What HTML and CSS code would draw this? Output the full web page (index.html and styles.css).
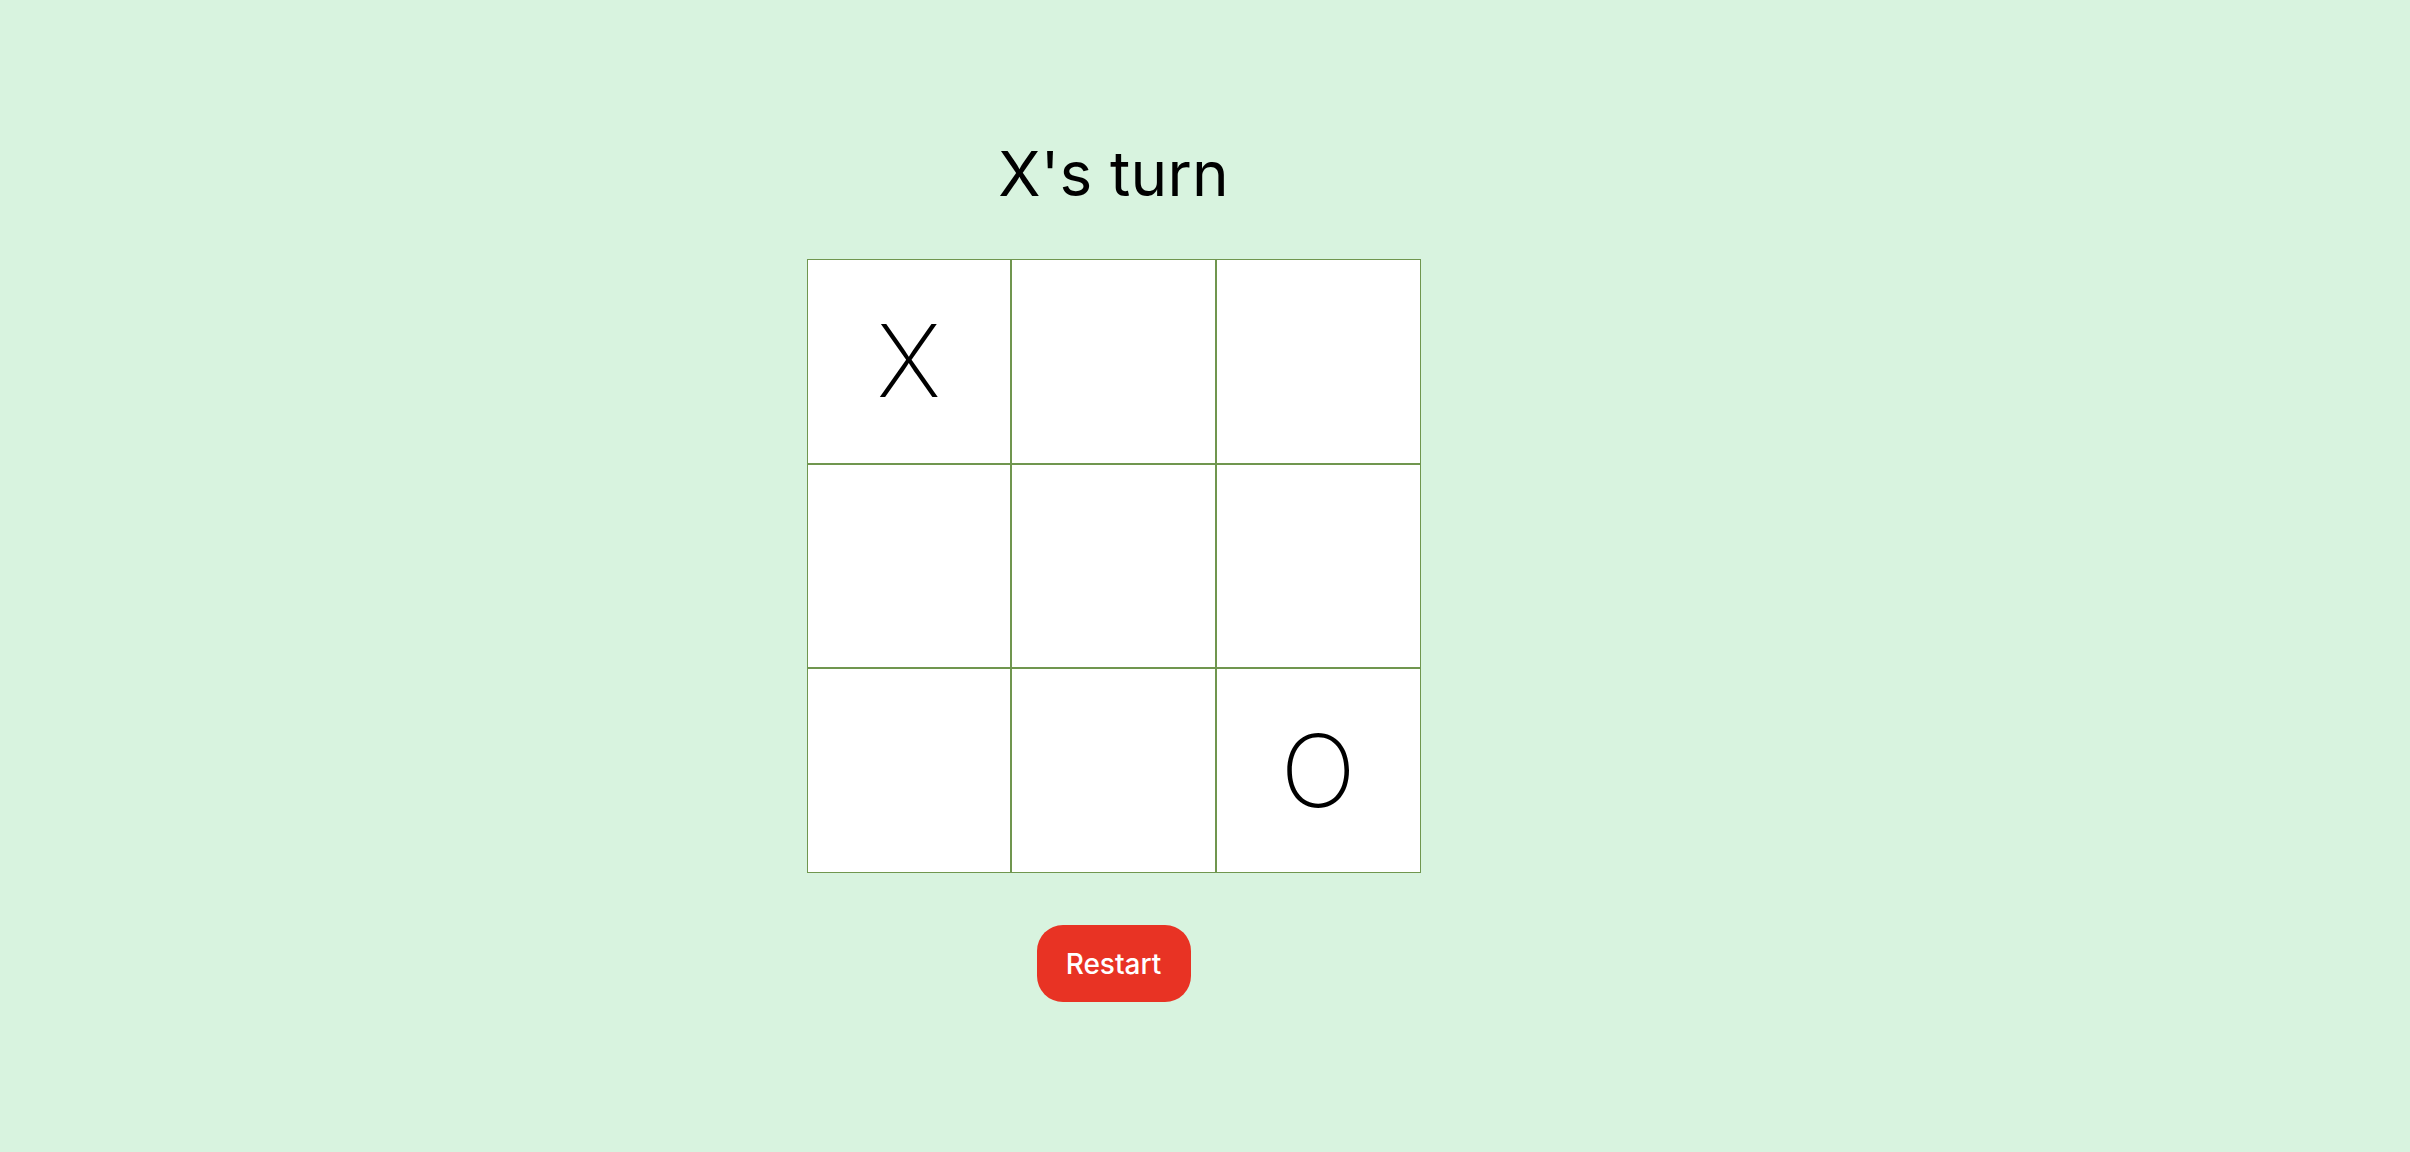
FILE: index.html
```html
<!DOCTYPE html>
<html lang="en">
<head>
<meta charset="utf-8">
<title>Tic Tac Toe</title>
<link rel="stylesheet" href="styles.css">
</head>
<body>
<main class="game">
  <h1 class="status">X's turn</h1>
  <div class="board">
    <div class="cell">X</div>
    <div class="cell"></div>
    <div class="cell"></div>
    <div class="cell"></div>
    <div class="cell"></div>
    <div class="cell"></div>
    <div class="cell"></div>
    <div class="cell"></div>
    <div class="cell">O</div>
  </div>
  <button class="restart">Restart</button>
</main>
</body>
</html>
```
FILE: styles.css
```css
html, body {
  margin: 0;
  padding: 0;
  background: #d8f3df;
  height: 100%;
}
body {
  font-family: Inter, "Noto Sans", sans-serif;
  color: #000;
}
.game {
  box-sizing: border-box;
  width: 2227px;
  display: flex;
  flex-direction: column;
  align-items: center;
  padding-top: 136px;
}
.status {
  margin: 0;
  font-size: 62px;
  font-weight: 400;
  line-height: 75px;
  letter-spacing: 0.2px;
}
.board {
  margin-top: 48px;
  width: 614px;
  height: 614px;
  display: grid;
  grid-template-columns: repeat(3, 1fr);
  grid-template-rows: repeat(3, 1fr);
}
.cell {
  background: #fff;
  border: 1px solid #70964f;
  display: flex;
  align-items: center;
  justify-content: center;
  font-size: 100px;
  font-weight: 200;
  line-height: 1;
}
.restart {
  margin-top: 52px;
  width: 154px;
  height: 77px;
  border: none;
  border-radius: 26px;
  background: #e83324;
  color: #fff;
  font-family: Inter, "Noto Sans", sans-serif;
  font-size: 28px;
  font-weight: 500;
  padding: 0;
}
```
